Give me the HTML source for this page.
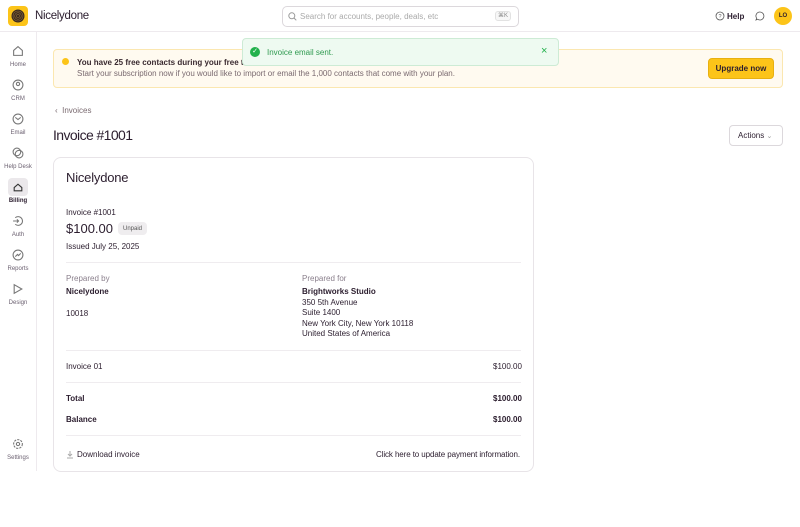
<!DOCTYPE html><html><head><style>
*{box-sizing:border-box;margin:0;padding:0}
body{width:800px;height:527px;background:#fff;font-family:"Liberation Sans",sans-serif;color:#2b1d2e;position:relative;overflow:hidden;font-size:8px}
.a{position:absolute;white-space:nowrap}
.nav{position:absolute;left:0;width:36px;text-align:center;font-size:6px;color:#6b6070}
.nav svg{display:block;margin:0 auto 5px}
.hr{position:absolute;left:66px;width:455px;border-top:1px solid #efecef}
.b{font-weight:bold}
</style></head><body>
<div class="a" style="left:0;top:31px;width:800px;border-top:1px solid #eeeaee"></div>
<div class="a" style="left:36px;top:32px;height:439px;border-left:1px solid #eeeaee"></div>
<div class="a" style="left:8px;top:6px;width:20px;height:20px;background:#fcc419;border-radius:4px"></div>
<svg class="a" style="left:11px;top:9px" width="14" height="14" viewBox="0 0 14 14"><circle cx="7" cy="7" r="6.5" fill="#3a2a1e"/><circle cx="7" cy="7" r="5" fill="none" stroke="#8a6a3a" stroke-width=".6"/><circle cx="7" cy="7" r="3.3" fill="none" stroke="#8a6a3a" stroke-width=".6"/><circle cx="7" cy="7" r="1.6" fill="none" stroke="#8a6a3a" stroke-width=".6"/></svg>
<div class="a" style="left:35px;top:10px;font-size:11.5px;letter-spacing:-0.3px">Nicelydone</div>
<div class="a" style="left:282px;top:6px;width:237px;height:21px;border:1px solid #dcd8dc;border-radius:5px"></div>
<svg class="a" style="left:288px;top:12px" width="9" height="9" viewBox="0 0 9 9"><circle cx="3.8" cy="3.8" r="3" fill="none" stroke="#999" stroke-width="1"/><path d="M6 6l2.3 2.3" stroke="#999"/></svg>
<div class="a" style="left:300px;top:12px;font-size:8px;color:#aaa">Search for accounts, people, deals, etc</div>
<div class="a" style="left:495px;top:11px;width:16px;height:10px;border:1px solid #e2e2e2;border-radius:3px;font-size:6px;color:#888;text-align:center;line-height:9px;background:#f7f7f7">⌘K</div>
<svg class="a" style="left:715px;top:11px" width="10" height="10" viewBox="0 0 10 10"><circle cx="5" cy="5" r="4" fill="none" stroke="#555" stroke-width=".8"/><text x="5" y="7" font-size="5.5" text-anchor="middle" fill="#555">?</text></svg>
<div class="a b" style="left:727px;top:12px;font-size:8px">Help</div>
<svg class="a" style="left:755px;top:11px" width="10" height="10" viewBox="0 0 10 10"><path d="M5 1a4 4 0 1 1-2.5 7.2L1 9l.6-1.8A4 4 0 0 1 5 1z" fill="none" stroke="#555" stroke-width=".8"/></svg>
<div class="a" style="left:774px;top:7px;width:18px;height:18px;border-radius:50%;background:#fcc419;font-size:6px;font-weight:bold;text-align:center;line-height:18px">LO</div>

<div class="nav" style="top:45px"><svg width="12" height="12" viewBox="0 0 11 11"><path d="M1.5 5L5.5 1.5 9.5 5v4.5h-8z" fill="none" stroke="#777"/></svg>Home</div>
<div class="nav" style="top:79px"><svg width="12" height="12" viewBox="0 0 11 11"><circle cx="5.5" cy="5.5" r="4.5" fill="none" stroke="#777"/><circle cx="5.5" cy="4.5" r="1.5" fill="none" stroke="#777"/></svg>CRM</div>
<div class="nav" style="top:113px"><svg width="12" height="12" viewBox="0 0 11 11"><circle cx="5.5" cy="5.5" r="4.5" fill="none" stroke="#777"/><path d="M3 4l2.5 2 2.5-2" fill="none" stroke="#777"/></svg>Email</div>
<div class="nav" style="top:147px"><svg width="12" height="12" viewBox="0 0 11 11"><circle cx="4.5" cy="4.5" r="3.5" fill="none" stroke="#777"/><circle cx="6.5" cy="6.5" r="3.5" fill="none" stroke="#777"/></svg>Help Desk</div>
<div class="a" style="left:8px;top:178px;width:20px;height:18px;background:#ebe8eb;border-radius:4px"></div>
<div class="nav" style="top:181px;color:#2b1d2e;font-weight:bold"><svg width="12" height="12" viewBox="0 0 11 11"><path d="M1.5 9h8M2 9V6l3.5-3 3.5 3v3" fill="none" stroke="#333"/></svg>Billing</div>
<div class="nav" style="top:215px"><svg width="12" height="12" viewBox="0 0 11 11"><path d="M3 2.5a4 4 0 1 1 0 6M1 5.5h5M4.5 4l1.5 1.5L4.5 7" fill="none" stroke="#777"/></svg>Auth</div>
<div class="nav" style="top:249px"><svg width="12" height="12" viewBox="0 0 11 11"><circle cx="5.5" cy="5.5" r="4.5" fill="none" stroke="#777"/><path d="M3 7l2-2 1 1 2-2" fill="none" stroke="#777"/></svg>Reports</div>
<div class="nav" style="top:283px"><svg width="12" height="12" viewBox="0 0 11 11"><path d="M2 1.5v8l7-4z" fill="none" stroke="#777"/></svg>Design</div>
<div class="nav" style="top:438px"><svg width="12" height="12" viewBox="0 0 11 11"><circle cx="5.5" cy="5.5" r="4" fill="none" stroke="#777" stroke-dasharray="2 1"/><circle cx="5.5" cy="5.5" r="1.5" fill="none" stroke="#777"/></svg>Settings</div>

<div class="a" style="left:53px;top:49px;width:730px;height:39px;background:#fffaf0;border:1px solid #fbe7b0;border-radius:4px"></div>
<div class="a" style="left:62px;top:58px;width:7px;height:7px;border-radius:50%;background:#fcc419"></div>
<div class="a b" style="left:77px;top:58px;font-size:8px;color:#3a2a30">You have 25 free contacts during your free trial</div>
<div class="a" style="left:77px;top:69px;font-size:8px;color:#7a6a70">Start your subscription now if you would like to import or email the 1,000 contacts that come with your plan.</div>
<div class="a b" style="left:708px;top:58px;width:66px;height:21px;background:#fcc419;border:1px solid #e8b010;border-radius:4px;font-size:8px;text-align:center;line-height:19px">Upgrade now</div>

<div class="a" style="left:242px;top:38px;width:317px;height:28px;background:#eefaf1;border:1px solid #cdebd5;border-radius:4px"></div>
<div class="a" style="left:250px;top:47px;width:10px;height:10px;border-radius:50%;background:#22b14c;color:#fff;font-size:7px;text-align:center;line-height:10px">✓</div>
<div class="a" style="left:267px;top:48px;font-size:8px;color:#2f9a50">Invoice email sent.</div>
<div class="a" style="left:541px;top:45px;font-size:11px;color:#22b14c">×</div>

<div class="a" style="left:55px;top:106px;font-size:8px;color:#7a6a70">‹&nbsp; Invoices</div>
<div class="a" style="left:53px;top:127px;font-size:14px;letter-spacing:-0.6px">Invoice #1001</div>
<div class="a" style="left:729px;top:125px;width:54px;height:21px;border:1px solid #dcd8dc;border-radius:4px;font-size:8px;line-height:19px;padding-left:8px">Actions <span style="color:#999;font-size:7px">⌄</span></div>

<div class="a" style="left:53px;top:157px;width:481px;height:315px;border:1px solid #e8e4e8;border-radius:8px"></div>
<div class="a" style="left:66px;top:170px;font-size:13px;letter-spacing:-0.2px">Nicelydone</div>
<div class="a" style="left:66px;top:208px">Invoice #1001</div>
<div class="a" style="left:66px;top:221px;font-size:13px">$100.00</div>
<div class="a" style="left:118px;top:222px;width:29px;height:13px;background:#efedef;border-radius:4px;font-size:6px;color:#555;display:flex;align-items:center;justify-content:center">Unpaid</div>
<div class="a" style="left:66px;top:242px">Issued July 25, 2025</div>
<div class="hr" style="top:262px"></div>
<div class="a" style="left:66px;top:274px;color:#8a7f8c">Prepared by</div>
<div class="a b" style="left:66px;top:287px">Nicelydone</div>
<div class="a" style="left:66px;top:309px">10018</div>
<div class="a" style="left:302px;top:274px;color:#8a7f8c">Prepared for</div>
<div class="a" style="left:302px;top:287px;line-height:10.6px"><b>Brightworks Studio</b><br>350 5th Avenue<br>Suite 1400<br>New York City, New York 10118<br>United States of America</div>
<div class="hr" style="top:350px"></div>
<div class="a" style="left:66px;top:362px">Invoice 01</div>
<div class="a" style="left:493px;top:362px">$100.00</div>
<div class="hr" style="top:382px"></div>
<div class="a b" style="left:66px;top:394px">Total</div>
<div class="a b" style="left:493px;top:394px">$100.00</div>
<div class="a b" style="left:66px;top:415px">Balance</div>
<div class="a b" style="left:493px;top:415px">$100.00</div>
<div class="hr" style="top:435px"></div>
<svg class="a" style="left:66px;top:450px" width="8" height="9" viewBox="0 0 8 9"><path d="M4 1v5M2 4l2 2 2-2M1 8h6" fill="none" stroke="#aaa"/></svg>
<div class="a" style="left:77px;top:450px">Download invoice</div>
<div class="a" style="left:376px;top:450px;letter-spacing:-0.1px">Click here to update payment information.</div>
</body></html>
